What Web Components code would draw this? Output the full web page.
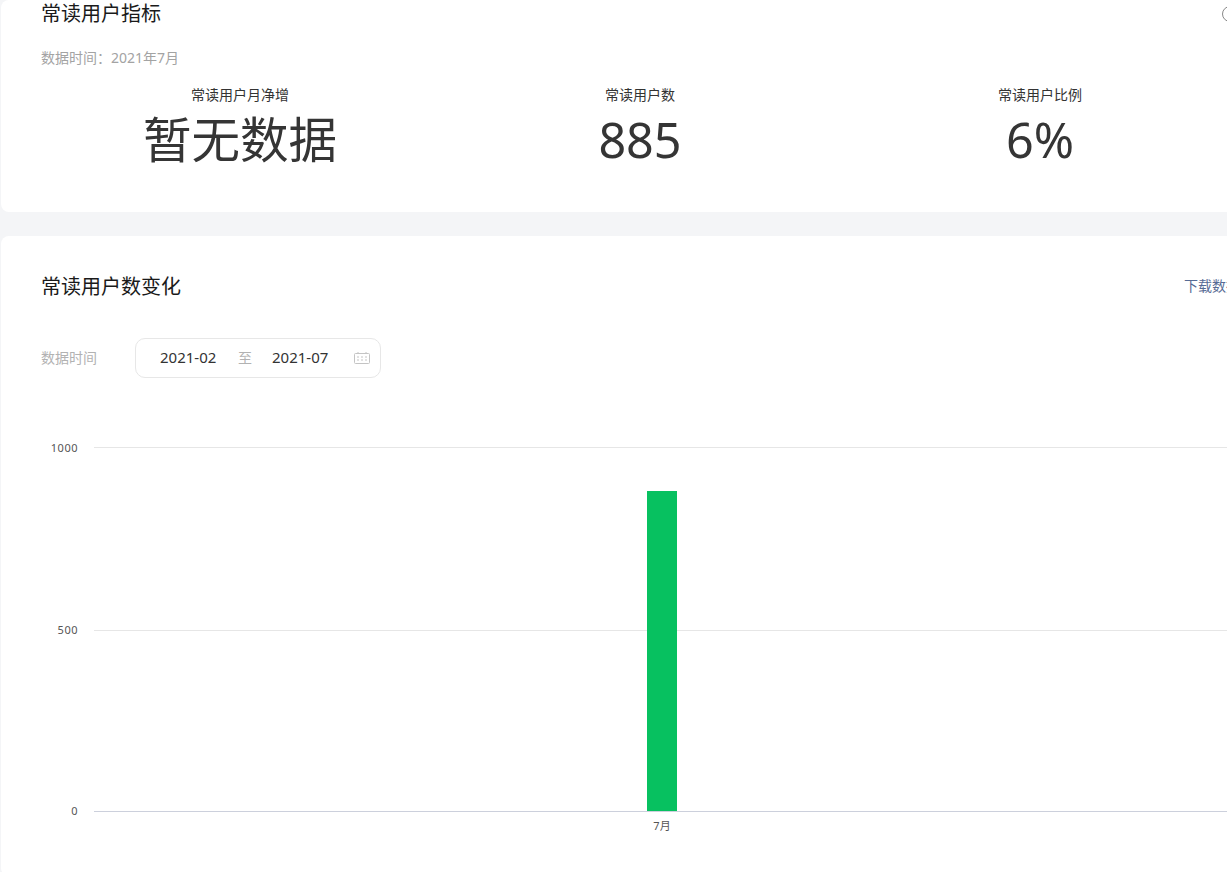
<!DOCTYPE html>
<html lang="zh-CN"><head><meta charset="utf-8"><title>常读用户</title>
<style>
html,body{margin:0;padding:0;height:872px;overflow:hidden;background:#f4f5f7}
body{font-family:"Noto Sans","Noto Sans CJK SC",sans-serif;color:#333;padding-left:1px}
#page{width:1300px;display:flex;flex-direction:column;gap:24px}
</style></head><body>
<template id="t-card"><style>
:host{display:block;background:#fff;border-radius:8px;box-sizing:border-box}
:host([kind=top]){height:212px;padding:0 40px 0 40px}
:host([kind=main]){height:640px;padding:37px 0 0 40px}
.head{display:flex;justify-content:space-between;align-items:center}
::slotted([slot=title]){font-size:20px;line-height:28px;color:#1a1a1a;font-weight:400}
</style><div class="head"><slot name="title"></slot><slot name="action"></slot></div><slot></slot></template>
<template id="t-metric"><style>
:host{display:flex;flex-direction:column;align-items:center;flex:0 0 400px}
.l{font-size:14px;line-height:18px;color:#333}
.v{font-size:48.5px;line-height:66px;color:#353535;margin-top:2px}
</style><div class="l"><slot name="label"></slot></div><div class="v"><slot></slot></div></template>
<template id="t-range"><style>
:host{display:flex;align-items:center;width:246px;height:40px;box-sizing:border-box;border:1px solid #e7e7e7;border-radius:10px;font-size:15px;color:#333;padding-left:24px}
.a,.b{width:56px;white-space:nowrap;margin-bottom:2px}.s{font-size:14px;color:#b2b2b2;margin:0 20px 2px 22px}
svg{margin-left:26px;display:block}
</style><span class="a">2021-02</span><span class="s">至</span><span class="b">2021-07</span>
<svg width="16" height="12" viewBox="0 0 16 12" fill="none" stroke="#c4c4c4"><rect x=".5" y="1.5" width="15" height="10" rx="1"/><path d="M4 0v2M12 0v2" /><path d="M3 5h2M7 5h2M11 5h2M3 8h2M7 8h2M11 8h2"/></svg></template>
<template id="t-chart"><style>
:host{display:block;height:446px;margin-left:-40px}
svg{display:block;overflow:visible}
text{font-family:"Noto Sans","Noto Sans CJK SC",sans-serif;font-size:11px;letter-spacing:.5px;fill:#555}
</style><svg width="1300" height="446" viewBox="0 0 1300 446">
<path d="M93 .5H1300M93 183.5H1300" stroke="#e6e6e6"/><path d="M93 364.5H1300" stroke="#ccd0dc"/>
<rect x="646" y="44" width="30" height="320" fill="#07c160"/>
<text x="77" y="5" text-anchor="end">1000</text><text x="77" y="187" text-anchor="end">500</text><text x="77" y="368" text-anchor="end">0</text>
<text x="661" y="383" text-anchor="middle" style="letter-spacing:0">7月</text></svg></template>

<div id="page">
<x-card kind="top">
<span slot="title">常读用户指标</span>
<svg slot="action" style="margin-right:23px" width="16" height="16" viewBox="0 0 16 16" fill="none" stroke="#888"><circle cx="8" cy="8" r="7.5"/></svg>
<x-note>数据时间：2021年7月</x-note>
<x-metrics>
<x-metric><span slot="label">常读用户月净增</span>暂无数据</x-metric>
<x-metric><span slot="label">常读用户数</span>885</x-metric>
<x-metric><span slot="label">常读用户比例</span>6%</x-metric>
</x-metrics>
</x-card>
<x-card kind="main">
<span slot="title">常读用户数变化</span>
<x-link slot="action">下载数据明细</x-link>
<x-filter><span>数据时间</span><x-range></x-range></x-filter>
<x-chart></x-chart>
</x-card>
</div>
<script>
const fromT=(id)=>class extends HTMLElement{constructor(){super();this.attachShadow({mode:'open'}).appendChild(document.getElementById(id).content.cloneNode(true))}};
const withCss=(css)=>class extends HTMLElement{constructor(){super();this.attachShadow({mode:'open'}).innerHTML='<style>'+css+'</style><slot></slot>'}};
customElements.define('x-card',fromT('t-card'));
customElements.define('x-metric',fromT('t-metric'));
customElements.define('x-range',fromT('t-range'));
customElements.define('x-chart',fromT('t-chart'));
customElements.define('x-note',withCss(':host{display:block;font-size:14px;line-height:20px;color:#a3a3a3;margin-top:20px}'));
customElements.define('x-metrics',withCss(':host{display:flex;margin-top:18px;margin-left:-1px}'));
customElements.define('x-link',withCss(':host{display:block;font-size:14px;line-height:20px;color:#576b95;white-space:nowrap;margin:0 33px 2px 0}'));
customElements.define('x-filter',withCss(':host{display:flex;align-items:center;gap:38px;font-size:14px;color:#b2b2b2;margin-top:37px;margin-bottom:69px}::slotted(span){margin-bottom:2px}'));
</script>
</body></html>
